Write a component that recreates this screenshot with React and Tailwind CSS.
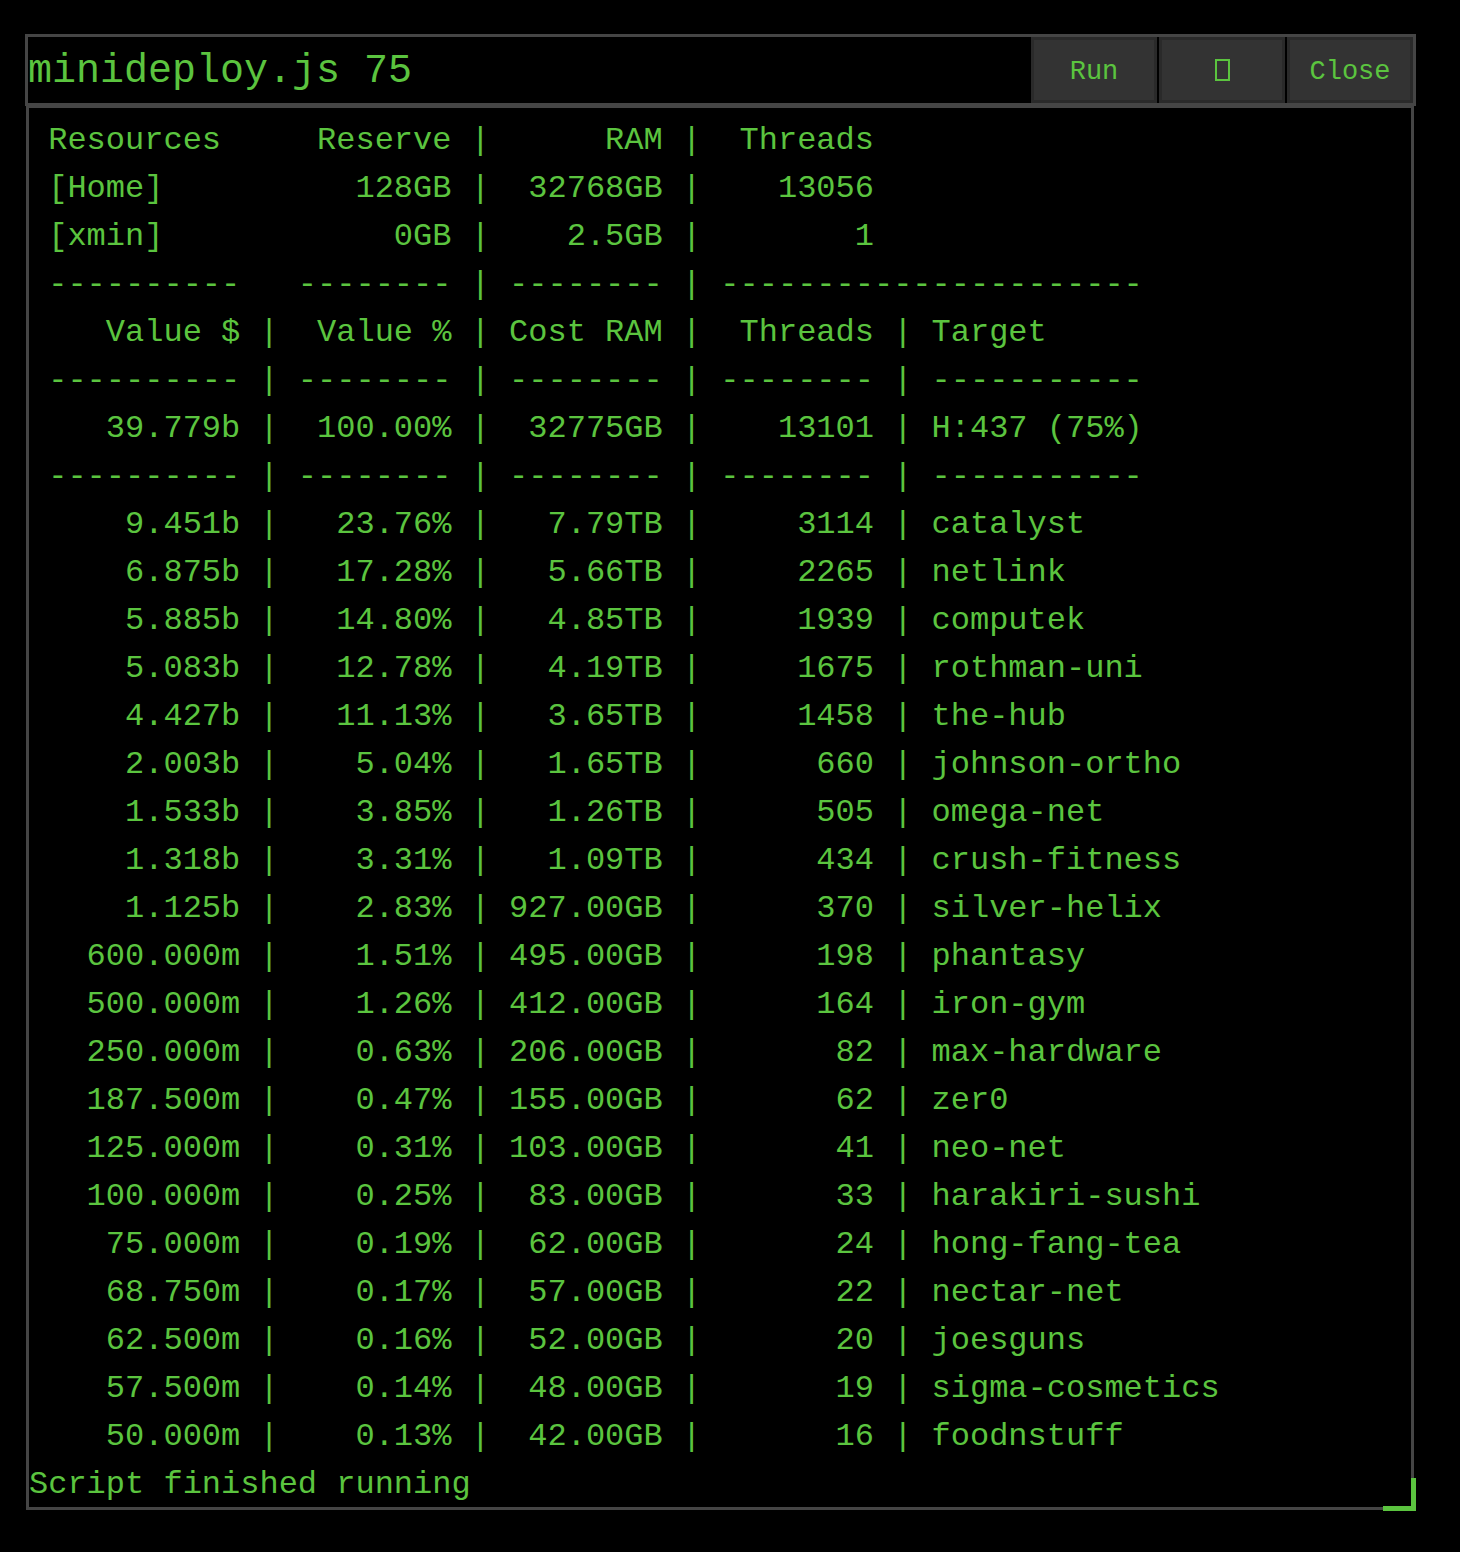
import React from 'react';

const rows = [
    ['9.451b', '23.76%', '7.79TB', '3114', 'catalyst'],
    ['6.875b', '17.28%', '5.66TB', '2265', 'netlink'],
    ['5.885b', '14.80%', '4.85TB', '1939', 'computek'],
    ['5.083b', '12.78%', '4.19TB', '1675', 'rothman-uni'],
    ['4.427b', '11.13%', '3.65TB', '1458', 'the-hub'],
    ['2.003b', '5.04%', '1.65TB', '660', 'johnson-ortho'],
    ['1.533b', '3.85%', '1.26TB', '505', 'omega-net'],
    ['1.318b', '3.31%', '1.09TB', '434', 'crush-fitness'],
    ['1.125b', '2.83%', '927.00GB', '370', 'silver-helix'],
    ['600.000m', '1.51%', '495.00GB', '198', 'phantasy'],
    ['500.000m', '1.26%', '412.00GB', '164', 'iron-gym'],
    ['250.000m', '0.63%', '206.00GB', '82', 'max-hardware'],
    ['187.500m', '0.47%', '155.00GB', '62', 'zer0'],
    ['125.000m', '0.31%', '103.00GB', '41', 'neo-net'],
    ['100.000m', '0.25%', '83.00GB', '33', 'harakiri-sushi'],
    ['75.000m', '0.19%', '62.00GB', '24', 'hong-fang-tea'],
    ['68.750m', '0.17%', '57.00GB', '22', 'nectar-net'],
    ['62.500m', '0.16%', '52.00GB', '20', 'joesguns'],
    ['57.500m', '0.14%', '48.00GB', '19', 'sigma-cosmetics'],
    ['50.000m', '0.13%', '42.00GB', '16', 'foodnstuff'],
];

const d = (n) => '-'.repeat(n);
const row = (a, b, c, t, tgt) =>
    ' ' + a.padStart(10) + ' | ' + b.padStart(8) + ' | ' + c.padStart(8) + ' | ' + t.padStart(8) + ' | ' + tgt;
const sep = row(d(10), d(8), d(8), d(8), d(11));

const lines = [
    ' ' + 'Resources'.padEnd(10) + '   ' + 'Reserve'.padStart(8) + ' | ' + 'RAM'.padStart(8) + ' | ' + 'Threads'.padStart(8),
    ' ' + '[Home]'.padEnd(10) + '   ' + '128GB'.padStart(8) + ' | ' + '32768GB'.padStart(8) + ' | ' + '13056'.padStart(8),
    ' ' + '[xmin]'.padEnd(10) + '   ' + '0GB'.padStart(8) + ' | ' + '2.5GB'.padStart(8) + ' | ' + '1'.padStart(8),
    ' ' + d(10) + '   ' + d(8) + ' | ' + d(8) + ' | ' + d(22),
    row('Value $', 'Value %', 'Cost RAM', 'Threads', 'Target'),
    sep,
    row('39.779b', '100.00%', '32775GB', '13101', 'H:437 (75%)'),
    sep,
    ...rows.map(r => row(...r)),
];

const Btn = ({ children }) => (
    <button className="w-[126px] h-[66px] bg-[#333] border-[3px] border-[#2a2a2a] text-[#5bc43f] text-[27px] flex items-center justify-center pt-[5px]">
        {children}
    </button>
);

export default function App() {
    return (
        <div className="w-[1460px] h-[1552px] bg-black pt-[34px] pl-[25px] font-['Liberation_Mono',monospace] text-[#5bc43f]">
            <div className="w-[1391px] relative">
                {/* Title bar */}
                <div className="h-[72px] border-[3px] border-[#454545] flex items-stretch">
                    <div className="flex-1 flex items-center text-[40px] leading-none whitespace-pre pt-[4px]">minideploy.js 75</div>
                    <div className="flex gap-[2px]">
                        <Btn>Run</Btn>
                        <Btn><span className="w-[15px] h-[22px] border-2 border-[#5bc43f] inline-block -mt-[6px]" /></Btn>
                        <Btn>Close</Btn>
                    </div>
                </div>
                {/* Body */}
                <div className="ml-px mr-[2px] h-[1404px] border-[3px] border-t-[2px] border-[#454545] pt-[9px] text-[32px] leading-[48px] whitespace-pre">
                    {lines.map((l, i) => <div key={i}>{l}</div>)}
                    <div>Script finished running</div>
                </div>
                {/* resize handle */}
                <div className="absolute right-0 bottom-[-1px] w-[33px] h-[33px] border-r-[5px] border-b-[5px] border-[#5bc43f]" />
            </div>
        </div>
    );
}
